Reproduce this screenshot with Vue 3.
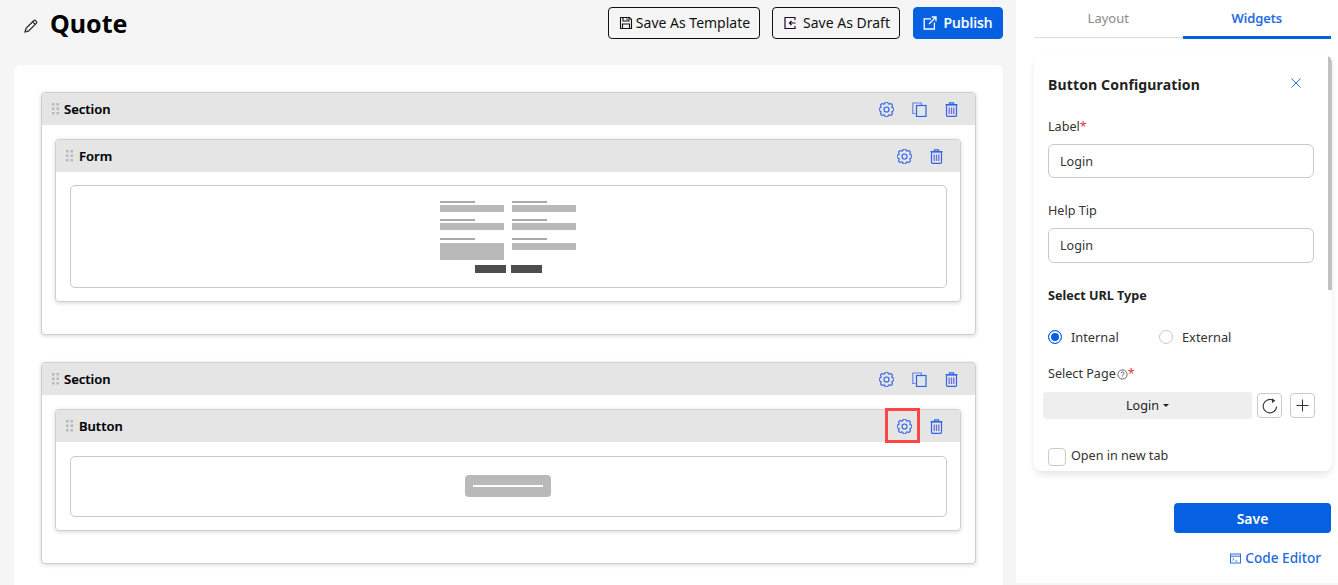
<script setup>
const sections = [
  { id: 1, inner: 'Form', kind: 'form', highlight: false },
  { id: 2, inner: 'Button', kind: 'button', highlight: true }
]
const wireLabels = [
  [440, 201], [512, 201], [440, 219], [512, 219], [440, 238], [512, 238]
]
const wireInputs = [
  [440, 205, 7], [512, 205, 7], [440, 223, 7], [512, 223, 7], [440, 243, 17], [512, 243, 7]
]
const gear = 'M9.796 1.343c-.527-1.79-3.065-1.79-3.592 0l-.094.319a.873.873 0 0 1-1.255.52l-.292-.16c-1.64-.892-3.433.902-2.54 2.541l.159.292a.873.873 0 0 1-.52 1.255l-.319.094c-1.79.527-1.79 3.065 0 3.592l.319.094a.873.873 0 0 1 .52 1.255l-.16.292c-.892 1.64.901 3.434 2.541 2.54l.292-.159a.873.873 0 0 1 1.255.52l.094.319c.527 1.79 3.065 1.79 3.592 0l.094-.319a.873.873 0 0 1 1.255-.52l.292.16c1.64.893 3.434-.902 2.54-2.541l-.159-.292a.873.873 0 0 1 .52-1.255l.319-.094c1.79-.527 1.79-3.065 0-3.592l-.319-.094a.873.873 0 0 1-.52-1.255l.16-.292c.893-1.64-.902-3.433-2.541-2.54l-.292.159a.873.873 0 0 1-1.255-.52l-.094-.319z'
</script>

<template>
  <div class="page">
    <main class="main">
      <header class="topbar">
        <div class="title">
          <svg class="pencil" viewBox="0 0 14 14" width="14" height="14" fill="none" stroke="#14202c" stroke-width="1.1">
            <path d="M1 13l.8-3.4L9.9 1.5a1 1 0 0 1 1.4 0l1.2 1.2a1 1 0 0 1 0 1.4L4.4 12.2 1 13z" />
            <path d="M8.6 2.8l2.6 2.6" />
            <path d="M1.8 9.6l2.6 2.6" stroke="#c98a3a" />
          </svg>
          <h1>Quote</h1>
        </div>
        <div class="actions-top">
          <button class="btn outline tpl">
            <svg viewBox="0 0 14 14" width="14" height="14" fill="none" stroke="#111" stroke-width="1.1">
              <path d="M1.5 1.5h9l2 2v9h-11z" /><path d="M4 1.5v3.5h6V1.5M3.5 12.5V8h7v4.5M8 2.5v1.5" />
            </svg>
            <span>Save As Template</span>
          </button>
          <button class="btn outline draft">
            <svg viewBox="0 0 14 14" width="14" height="14" fill="none" stroke="#1a0a30" stroke-width="1.2">
              <path d="M12 4V1.5H2v11h10V10" /><path d="M12.5 7H6.5M8.5 5L6.5 7l2 2" />
            </svg>
            <span>Save As Draft</span>
          </button>
          <button class="btn primary">
            <svg viewBox="0 0 14 14" width="14" height="14" fill="none" stroke="#fff" stroke-width="1.3">
              <path d="M8 2.8H1.2V13h10.2V6.5" /><path d="M6 8l7-7M8.8 1H13v4.2" />
            </svg>
            <span>Publish</span>
          </button>
        </div>
      </header>

      <div class="canvas">
        <section v-for="s in sections" :key="s.id" class="block outer">
          <div class="bar">
            <div class="bar-left">
              <svg class="dots" viewBox="0 0 7 12" width="7" height="12" fill="#b8b8b8">
                <rect x="0" y="0" width="2.5" height="2.5" /><rect x="4.5" y="0" width="2.5" height="2.5" />
                <rect x="0" y="4.5" width="2.5" height="2.5" /><rect x="4.5" y="4.5" width="2.5" height="2.5" />
                <rect x="0" y="9" width="2.5" height="2.5" /><rect x="4.5" y="9" width="2.5" height="2.5" />
              </svg>
              <span class="bar-label">Section</span>
            </div>
            <div class="bar-actions">
              <span class="ico gear-ico">
                <svg viewBox="0 0 16 16" width="15" height="15" fill="none" stroke="#2c62e6" stroke-width="1.2">
                  <path :d="gear" /><circle cx="8" cy="8" r="2.7" />
                </svg>
              </span>
              <span class="ico copy-ico">
                <svg viewBox="0 0 15 15" width="15" height="15" fill="none" stroke="#2f6ce8" stroke-width="1.2">
                  <path d="M3.5 11.5H.8V1h8.6v2.5" stroke="#6f82ea" /><rect x="4.5" y="3.5" width="9.5" height="11" stroke="#2468e8" />
                </svg>
              </span>
              <span class="ico">
                <svg viewBox="0 0 13 15" width="13" height="15" fill="none" stroke="#2f66e6" stroke-width="1.2">
                  <path d="M.5 2.7h12M4.5 2.5V.8h4v1.7" /><rect x="1.5" y="3" width="10" height="11.3" rx="1" />
                  <path d="M4.2 5.5v6.5M6.5 5.5v6.5M8.8 5.5v6.5" stroke="#6f6ee6" stroke-width="1.3" />
                </svg>
              </span>
            </div>
          </div>
          <div class="outer-body">
            <div class="block inner">
              <div class="bar">
                <div class="bar-left">
                  <svg class="dots" viewBox="0 0 7 12" width="7" height="12" fill="#b8b8b8">
                    <rect x="0" y="0" width="2.5" height="2.5" /><rect x="4.5" y="0" width="2.5" height="2.5" />
                    <rect x="0" y="4.5" width="2.5" height="2.5" /><rect x="4.5" y="4.5" width="2.5" height="2.5" />
                    <rect x="0" y="9" width="2.5" height="2.5" /><rect x="4.5" y="9" width="2.5" height="2.5" />
                  </svg>
                  <span class="bar-label">{{ s.inner }}</span>
                </div>
                <div class="bar-actions">
                  <span class="ico gear-ico" :class="{ marked: s.highlight }">
                    <svg viewBox="0 0 16 16" width="15" height="15" fill="none" stroke="#2c62e6" stroke-width="1.2">
                      <path :d="gear" /><circle cx="8" cy="8" r="2.7" />
                    </svg>
                  </span>
                  <span class="ico">
                    <svg viewBox="0 0 13 15" width="13" height="15" fill="none" stroke="#2f66e6" stroke-width="1.2">
                      <path d="M.5 2.7h12M4.5 2.5V.8h4v1.7" /><rect x="1.5" y="3" width="10" height="11.3" rx="1" />
                      <path d="M4.2 5.5v6.5M6.5 5.5v6.5M8.8 5.5v6.5" stroke="#6f6ee6" stroke-width="1.3" />
                    </svg>
                  </span>
                </div>
              </div>
              <div class="inner-body">
                <div class="preview" :class="s.kind">
                  <svg v-if="s.kind === 'form'" viewBox="440 201 136 73" width="136" height="73">
                    <rect v-for="(l, i) in wireLabels" :key="'l' + i" :x="l[0]" :y="l[1]" width="35" height="2" fill="#a9a9a9" />
                    <rect v-for="(r, i) in wireInputs" :key="'r' + i" :x="r[0]" :y="r[1]" width="64" :height="r[2]" fill="#b9b9b9" />
                    <rect x="475" y="265" width="31" height="8" fill="#4d4d4d" />
                    <rect x="511" y="265" width="31" height="8" fill="#4d4d4d" />
                  </svg>
                  <div v-else class="wire-btn"><span></span></div>
                </div>
              </div>
            </div>
          </div>
        </section>
      </div>
    </main>

    <aside class="side">
      <nav class="tabs">
        <div class="tab">Layout</div>
        <div class="tab active">Widgets</div>
      </nav>

      <div class="config">
        <div class="scroll-thumb"></div>
        <div class="config-head">
          <span>Button Configuration</span>
          <svg viewBox="0 0 10 10" width="10" height="10" fill="none" stroke="#3a78e0" stroke-width="1">
            <path d="M.5.5l9 9M9.5.5l-9 9" />
          </svg>
        </div>

        <label class="lbl first">Label<i>*</i></label>
        <input class="txt" value="Login" readonly />

        <label class="lbl">Help Tip</label>
        <input class="txt tall" value="Login" readonly />

        <div class="sub">Select URL Type</div>

        <div class="radios">
          <span class="radio on"></span><span class="radio-text int">Internal</span>
          <span class="radio"></span><span class="radio-text">External</span>
        </div>

        <label class="lbl page-lbl">Select Page
          <svg viewBox="0 0 11 11" width="11" height="11" fill="none" stroke="#444" stroke-width=".8">
            <circle cx="5.5" cy="5.5" r="4.6" /><path d="M4 4.4a1.5 1.5 0 1 1 2.2 1.3c-.5.3-.7.5-.7 1" /><path d="M5.5 7.6v.8" />
          </svg><i>*</i>
        </label>

        <div class="picker">
          <div class="drop"><span>Login</span><b></b></div>
          <span class="sq refresh">
            <svg viewBox="0 0 16 16" width="16" height="16" fill="none" stroke="#333" stroke-width="1.1">
              <path d="M14.6 8.6A6.7 6.7 0 1 1 11 2.2" /><path d="M10 .2L13.4 2.8 10 5z" fill="#333" stroke="none" />
            </svg>
          </span>
          <span class="sq plus">
            <svg viewBox="0 0 13 13" width="13" height="13" fill="none" stroke="#333" stroke-width="1">
              <path d="M6.5 .5v12M.5 6.5h12" />
            </svg>
          </span>
        </div>

        <div class="check-row">
          <span class="check"></span><span class="check-text">Open in new tab</span>
        </div>
      </div>

      <div class="foot">
        <button class="save">Save</button>
        <div class="code">
          <svg viewBox="0 0 11 11" width="11" height="11" fill="none" stroke="#2a6fd8" stroke-width="1">
            <rect x=".5" y="1" width="10" height="9" /><path d="M.5 3.2h10" /><path d="M2.5 5l1.5 1.3-1.5 1.3M5 8h2.5" stroke-width=".8" />
          </svg>
          <span>Code Editor</span>
        </div>
      </div>
    </aside>
  </div>
</template>

<style scoped>
.page {
  display: flex;
  width: 1338px;
  height: 585px;
  overflow: hidden;
  background: #f5f5f5;
  font-family: "Noto Sans", "Open Sans", sans-serif;
  color: #111;
}
.main {
  width: 1016px;
  flex: none;
  padding: 0 13px 0 14px;
  box-sizing: border-box;
}
.topbar {
  height: 65px;
  display: flex;
  justify-content: space-between;
  align-items: flex-start;
}
.title {
  display: flex;
  align-items: center;
  padding: 4px 0 0 10px;
  height: 38px;
}
.pencil { margin-top: 6px; margin-right: 12px; }
h1 {
  margin: 0;
  font-size: 25px;
  line-height: 38px;
  font-weight: 700;
  color: #000;
}
.actions-top {
  display: flex;
  padding-top: 7px;
}
.btn {
  height: 32px;
  box-sizing: border-box;
  border-radius: 4px;
  font-family: inherit;
  font-size: 14px;
  display: flex;
  align-items: center;
  justify-content: center;
  padding: 0;
  line-height: 1;
}
.outline { background: transparent; border: 1px solid #111; color: #111; }
.tpl { width: 152px; gap: 3px; margin-right: 12px; padding-left: 1px; }
.draft { width: 128px; gap: 6px; margin-right: 13px; padding-left: 1px; }
.primary {
  width: 90px;
  gap: 6px;
  background: #0561e2;
  border: 1px solid #0561e2;
  color: #fff;
  font-weight: 500;
  -webkit-text-stroke: 0.2px #fff;
}
.canvas {
  background: #fff;
  border-radius: 6px 6px 0 0;
  padding: 27px;
  height: 520px;
  box-sizing: border-box;
  display: flex;
  flex-direction: column;
  gap: 27px;
}
.block {
  background: #fff;
  border: 1px solid #cfcfcf;
  border-radius: 4px;
  box-shadow: 0 1px 4px rgba(0, 0, 0, 0.16);
}
.outer-body { padding: 14px 14px 32px 13px; }
.bar {
  height: 32px;
  background: #e5e5e5;
  display: flex;
  justify-content: space-between;
  align-items: center;
  border-radius: 3px 3px 0 0;
  padding: 0 7px 0 10px;
}
.bar-left { display: flex; align-items: center; gap: 5px; }
.inner .bar-left { gap: 6px; }
.bar-label { font-size: 13px; font-weight: 600; color: #000; line-height: 18px; -webkit-text-stroke: 0.15px #000; }
.bar-actions { display: flex; }
.ico {
  position: relative;
  width: 33px;
  height: 20px;
  display: flex;
  align-items: center;
  justify-content: center;
  box-sizing: border-box;
}
.gear-ico { padding-left: 2px; }
.copy-ico { padding-left: 1px; }
.marked::after {
  content: "";
  position: absolute;
  left: -2px;
  top: -8px;
  width: 35px;
  height: 35px;
  box-sizing: border-box;
  border: 3px solid #f44;
}
.inner-body { padding: 13px 13px 13px 14px; }
.preview {
  border: 1px solid #c9c9c9;
  border-radius: 5px;
  display: flex;
  justify-content: center;
  box-sizing: border-box;
  padding-right: 2px;
}
.preview.form { height: 103px; padding-top: 15px; }
.preview.button { height: 61px; margin-top: 1px; align-items: center; padding-bottom: 1px; }
.wire-btn {
  width: 86px;
  height: 22px;
  border-radius: 4px;
  background: #b9b9b9;
  display: flex;
  align-items: center;
  justify-content: center;
}
.wire-btn span { width: 70px; height: 2px; background: #fff; }

.side {
  width: 322px;
  height: 583px;
  background: #fff;
  flex: none;
  box-sizing: border-box;
  padding-left: 18px;
  padding-right: 6px;
}
.tabs {
  display: flex;
  height: 38px;
  border-bottom: 1px solid #ddd;
  box-sizing: border-box;
  width: 297px;
}
.tab {
  flex: 1;
  text-align: center;
  font-size: 13px;
  line-height: 36px;
  color: #8a8a8a;
  height: 39px;
  box-sizing: border-box;
}
.tab.active {
  color: #1a6ae0;
  font-weight: 500;
  -webkit-text-stroke: 0.2px #1a6ae0;
  border-bottom: 3px solid #0561e2;
}
.config {
  position: relative;
  margin-top: 17px;
  width: 298px;
  height: 416px;
  box-sizing: border-box;
  padding: 19px 18px 0 14px;
  background: #fff;
  border-radius: 8px;
  box-shadow: 0 4px 8px -2px rgba(0, 0, 0, 0.14);
  overflow: hidden;
}
.scroll-thumb {
  position: absolute;
  right: 0;
  top: 1px;
  width: 4px;
  height: 234px;
  background: #c1c1c1;
}
.config-head {
  height: 20px;
  display: flex;
  justify-content: space-between;
  align-items: center;
  padding-right: 13px;
  font-size: 14px;
  font-weight: 700;
  letter-spacing: 0.15px;
  color: #222;
}
.config-head svg { margin-top: -2px; }
.lbl {
  display: block;
  margin-top: 23px;
  padding-top: 1px;
  font-size: 12.6px;
  line-height: 18px;
  color: #333;
}
.lbl i { font-style: normal; color: #e33; }
.txt {
  display: block;
  width: 266px;
  height: 34px;
  margin-top: 8px;
  box-sizing: border-box;
  border: 1px solid #c9c9c9;
  border-radius: 6px;
  padding: 0 11px;
  font-family: inherit;
  font-size: 12.6px;
  color: #333;
  outline: none;
}
.txt.tall { height: 35px; padding-bottom: 1px; }
.sub {
  margin-top: 23px;
  padding-top: 1px;
  font-size: 12.6px;
  line-height: 18px;
  font-weight: 700;
  color: #222;
}
.radios {
  display: flex;
  align-items: center;
  margin-top: 23px;
  height: 18px;
  font-size: 12.8px;
  color: #333;
}
.radio {
  width: 14px;
  height: 14px;
  box-sizing: border-box;
  border: 1px solid #c9c9c9;
  border-radius: 50%;
  margin-right: 9px;
  background: #fff;
}
.radio.on {
  border: 1px solid #0561e2;
  box-shadow: inset 0 0 0 2px #fff;
  background: #0561e2;
}
.radio-text.int { width: 88px; }
.page-lbl {
  margin-top: 18px;
  display: flex;
  align-items: center;
}
.page-lbl svg { margin-left: 1px; }
.picker {
  display: flex;
  align-items: center;
  margin: 9px -1px 0 -5px;
}
.drop {
  width: 209px;
  height: 27px;
  background: #eee;
  border-radius: 3px;
  display: flex;
  align-items: center;
  justify-content: center;
  font-size: 12.6px;
  color: #222;
}
.drop span { margin-top: -1px; }
.drop b {
  margin-left: 4px;
  border-top: 3px solid #222;
  border-left: 3px solid transparent;
  border-right: 3px solid transparent;
}
.sq {
  width: 25px;
  height: 25px;
  box-sizing: border-box;
  border: 1px solid #c9c9c9;
  border-radius: 4px;
  display: flex;
  align-items: center;
  justify-content: center;
}
.refresh { margin-left: 5px; }
.plus { margin-left: 8px; }
.check-row {
  display: flex;
  align-items: center;
  gap: 5px;
  margin-top: 29px;
  font-size: 12.6px;
  color: #333;
  line-height: 18px;
}
.check-text { margin-top: -2px; }
.check {
  width: 18px;
  height: 18px;
  box-sizing: border-box;
  border: 1px solid #c9c9c9;
  border-radius: 4px;
}
.foot {
  display: flex;
  flex-direction: column;
  align-items: flex-end;
  width: 297px;
  margin-top: 32px;
}
.save {
  width: 157px;
  height: 30px;
  background: #0561e2;
  border: none;
  border-radius: 4px;
  color: #fff;
  font-family: inherit;
  font-size: 14px;
  font-weight: 600;
  padding: 0;
}
.code {
  display: flex;
  align-items: center;
  gap: 4px;
  margin-top: 15px;
  padding-right: 10px;
  font-size: 13.6px;
  line-height: 20px;
  font-weight: 500;
  color: #1a6ae0;
}
</style>

<style>
html, body { margin: 0; overflow: hidden; }
</style>
